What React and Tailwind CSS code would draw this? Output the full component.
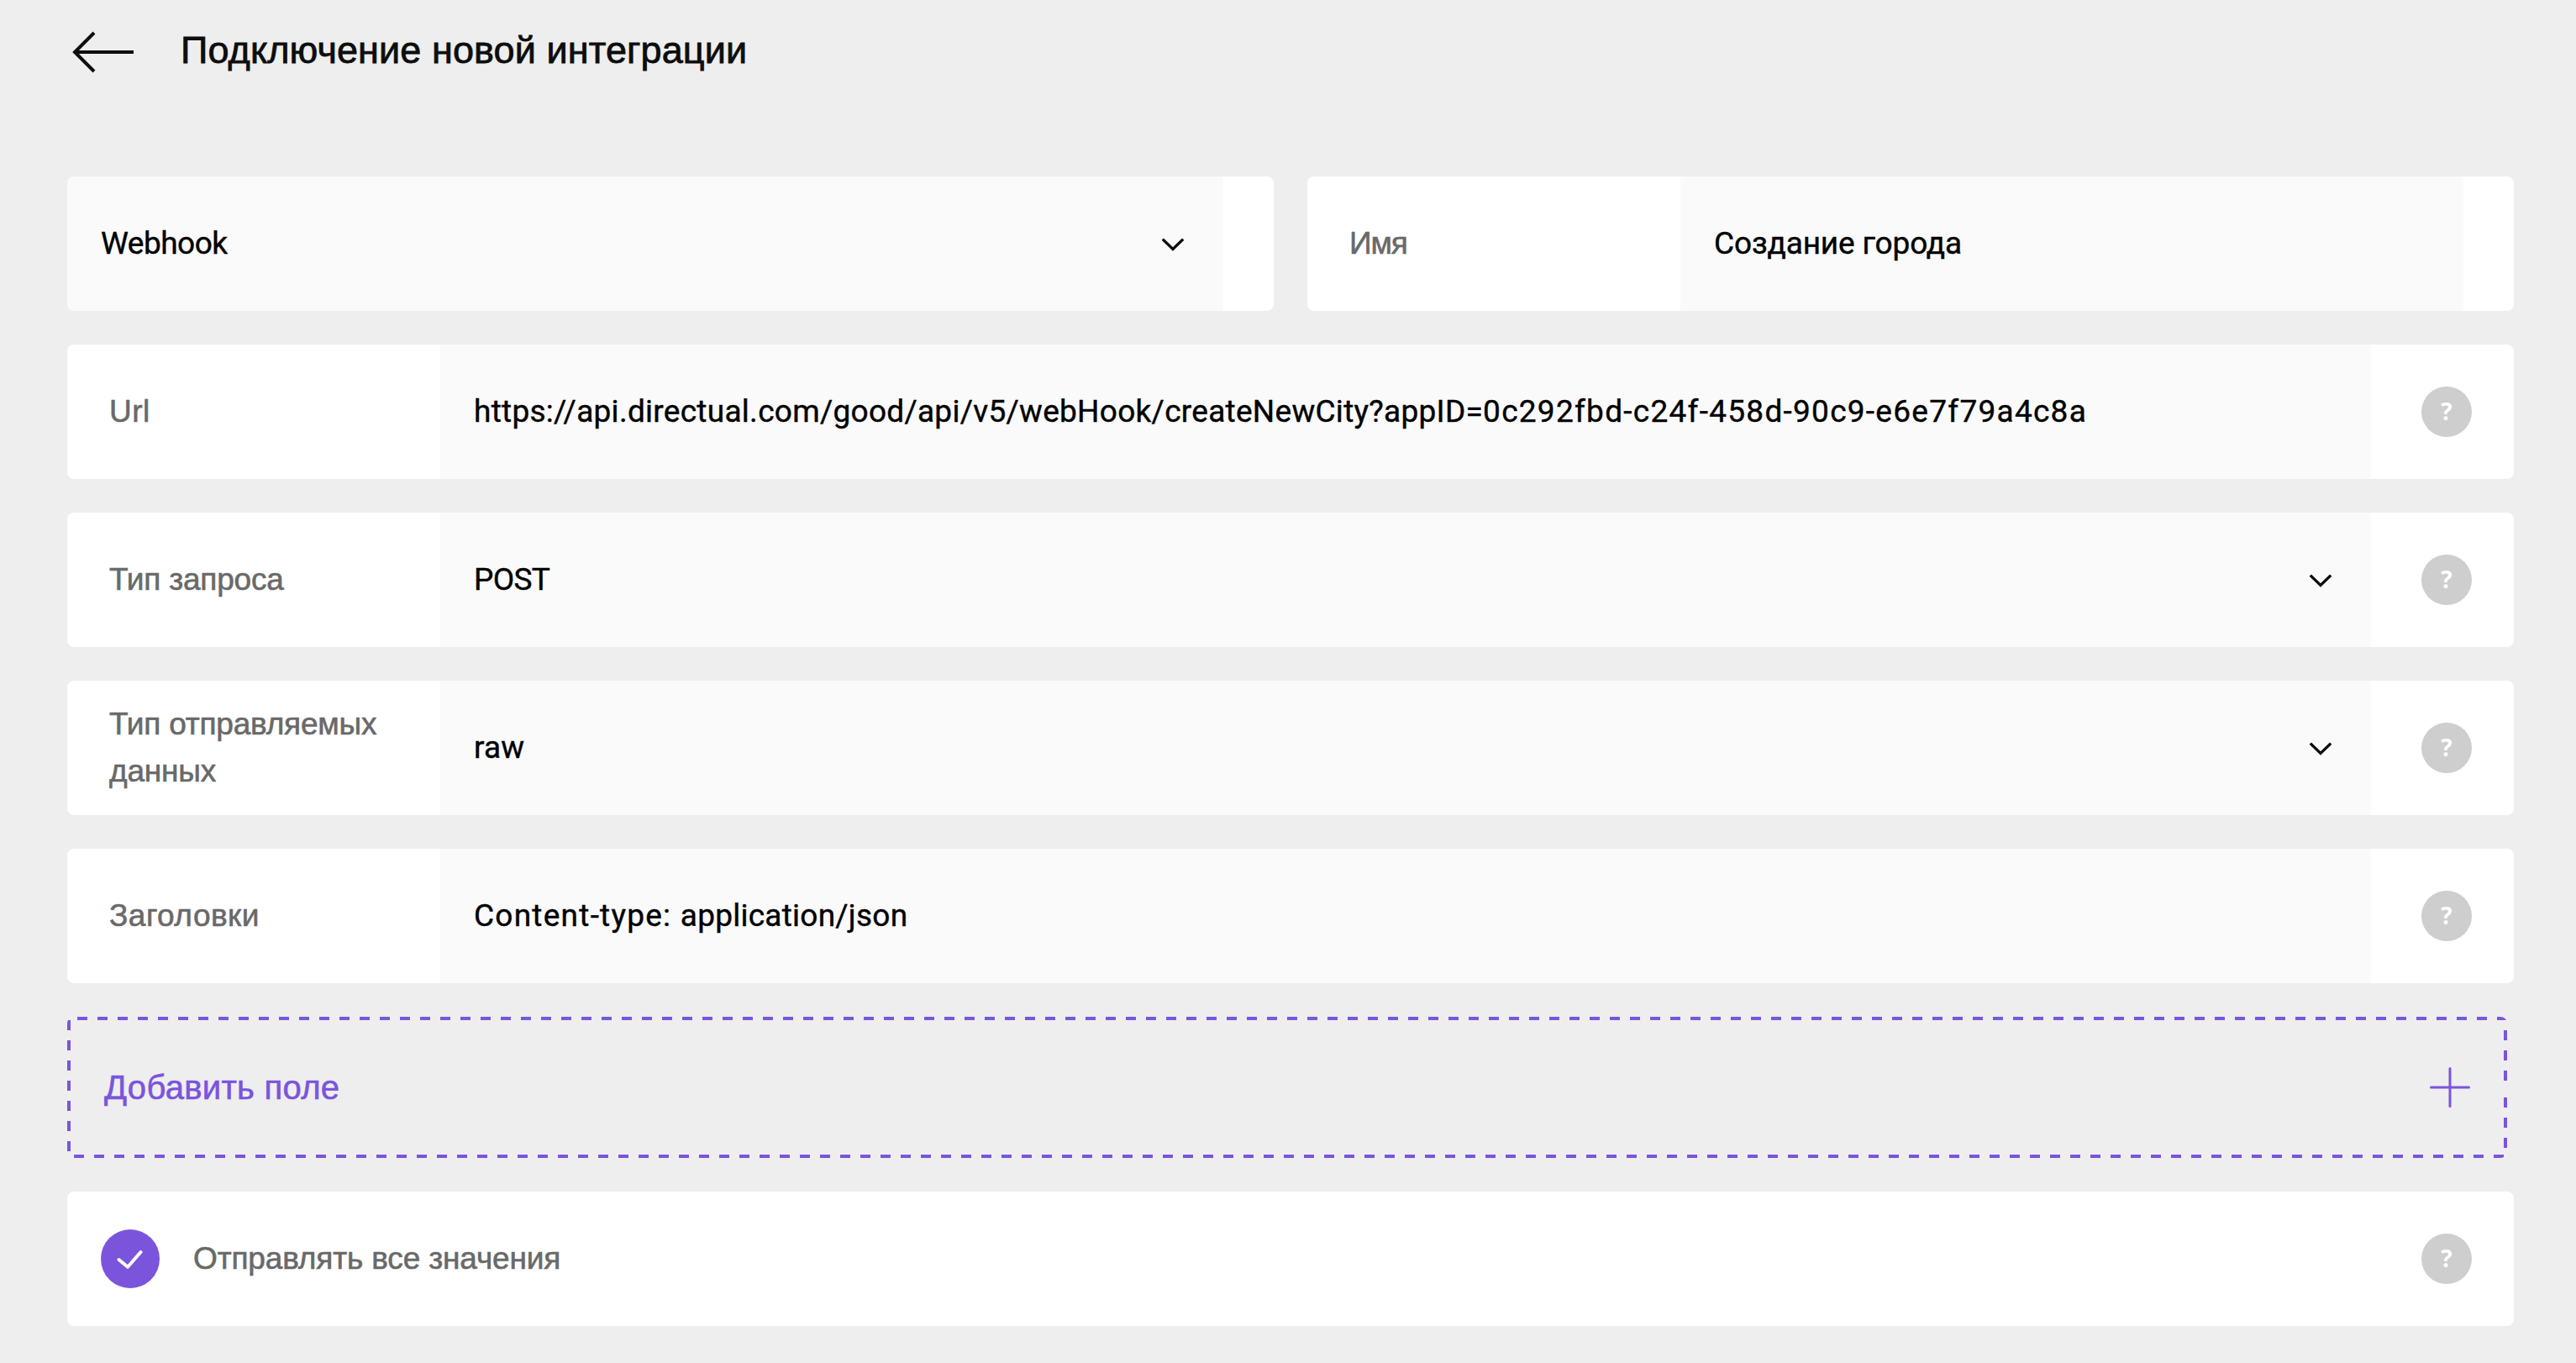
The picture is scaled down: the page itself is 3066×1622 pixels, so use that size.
import React, { useState } from 'react';

const HelpBadge = () => (
  <button className="flex size-[60px] shrink-0 items-center justify-center rounded-full bg-[#cecece] pb-0.5 font-['Open_Sans',sans-serif] text-[28px] font-bold leading-none text-white">
    ?
  </button>
);

const Chevron = () => (
  <svg className="h-[18px] w-[30px] shrink-0" viewBox="0 0 30 18" fill="none" stroke="#0d0d0d" strokeWidth="3.4">
    <path d="M2.8 3.6 L15 15.4 L27.2 3.6" />
  </svg>
);

const Label = ({ children, tracking }) => (
  <div className={`flex w-[444px] shrink-0 items-center pl-[50px] pr-10 font-['Liberation_Sans',sans-serif] text-[37px] leading-[56px] text-[#696969] [-webkit-text-stroke:0.6px_#696969] ${tracking || 'tracking-[-0.2px]'}`}>
    {children}
  </div>
);

const Value = ({ children, select, tracking }) => (
  <div className="flex flex-1 items-center justify-between bg-[#fafafa] pl-10 pr-[45px] font-[Roboto,sans-serif] text-[37px] leading-[56px] text-black [-webkit-text-stroke:0.4px_#000]">
    <span className={`whitespace-nowrap ${tracking || ''}`}>{children}</span>
    {select && <Chevron />}
  </div>
);

const Row = ({ label, value, select, labelTracking, tracking }) => (
  <div className="flex h-40 overflow-hidden rounded-lg bg-white">
    <Label tracking={labelTracking}>{label}</Label>
    <Value select={select} tracking={tracking}>{value}</Value>
    <div className="flex w-[170px] items-center pl-[60px]">
      <HelpBadge />
    </div>
  </div>
);

const App = () => {
  const [sendAll, setSendAll] = useState(true);

  return (
    <div className="h-[1622px] bg-[#eeeeee] pl-20 pr-[74px]">
      {/* Header */}
      <header className="flex h-[210px] items-start pl-[5px] pt-[32px]">
        <svg className="mt-[5px] h-[50px] w-[76px]" viewBox="0 0 76 50" fill="none" stroke="#0d0d0d" strokeWidth="4">
          <path d="M74 25 H4 M27 2 L4 25 L27 48" />
        </svg>
        <h1 className="ml-[54px] font-['Liberation_Sans',sans-serif] text-[45px] leading-[56px] tracking-[0.1px] text-[#0d0d0d] [-webkit-text-stroke:0.8px_#0d0d0d]">
          Подключение новой интеграции
        </h1>
      </header>

      <main className="flex flex-col gap-10">
        <div className="grid grid-cols-2 gap-10">
          <div className="flex h-40 overflow-hidden rounded-lg bg-white pr-[60px]">
            <Value select tracking="tracking-[-0.5px]">Webhook</Value>
          </div>
          <div className="flex h-40 overflow-hidden rounded-lg bg-white pr-[60px]">
            <Label tracking="tracking-[-1.1px]">Имя</Label>
            <Value tracking="tracking-[-0.15px]">Создание города</Value>
          </div>
        </div>

        <Row
          label="Url"
          labelTracking="tracking-[0.5px]"
          value={
            <>
              <span className="tracking-[0.28px]">https://api.directual.com/good/api/v5/webHook/createNewCity?appID=</span>
              <span className="tracking-[1.27px]">0c292fbd-c24f-458d-90c9-e6e7f79a4c8a</span>
            </>
          }
        />
        <Row label="Тип запроса" value="POST" select tracking="tracking-[-0.7px]" />
        <Row label="Тип отправляемых данных" value="raw" select tracking="tracking-[0.2px]" />
        <Row
          label="Заголовки"
          labelTracking="tracking-[0.5px]"
          value={
            <>
              <span className="tracking-[1.25px]">Content-type: </span>
              <span className="tracking-[0.25px]">application/json</span>
            </>
          }
        />

        {/* Add field */}
        <button className="relative mr-2 flex h-[168px] items-center justify-between overflow-hidden rounded-lg px-11 font-['Liberation_Sans',sans-serif] text-[40px] tracking-[0.3px] text-[#7b54dc] [-webkit-text-stroke:0.6px_#7b54dc]">
          <svg className="absolute inset-0 h-[168px] w-[2904px]" viewBox="0 0 2904 168" fill="none" stroke="currentColor" strokeWidth="4" strokeDasharray="12 12">
            <path d="M2902 96 V166 H2 V2 H2902 V80" />
          </svg>
          <span>Добавить поле</span>
          <svg className="size-12" viewBox="0 0 48 48" stroke="currentColor" strokeWidth="3" strokeLinecap="round">
            <path d="M24 1.5 V46.5 M1.5 24 H46.5" />
          </svg>
        </button>

        <div className="flex h-40 items-center rounded-lg bg-white pl-10 pr-[50px]">
          <button
            onClick={() => setSendAll(!sendAll)}
            className="flex size-[70px] items-center justify-center rounded-full bg-[#7b54dc]"
          >
            {sendAll && (
              <svg className="h-[24px] w-[32px]" viewBox="0 0 32 24" fill="none" stroke="white" strokeWidth="4" strokeLinecap="round" strokeLinejoin="round">
                <path d="M2.5 13 L13 21.8 L28.5 4" />
              </svg>
            )}
          </button>
          <span className="ml-10 flex-1 font-['Liberation_Sans',sans-serif] text-[37px] tracking-[-0.15px] text-[#696969] [-webkit-text-stroke:0.6px_#696969]">
            Отправлять все значения
          </span>
          <HelpBadge />
        </div>
      </main>
    </div>
  );
};

export default App;
